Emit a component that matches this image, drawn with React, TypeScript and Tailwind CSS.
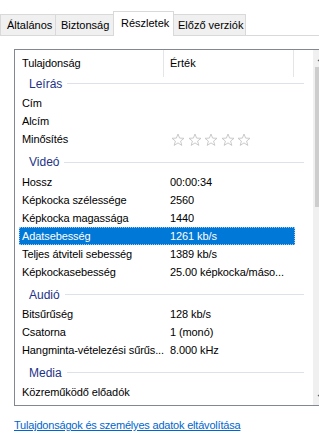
import React from "react";

const font = { fontFamily: '"Liberation Sans", Arial, sans-serif' };

function Star() {
  return (
    <svg width="14" height="14" viewBox="0 0 14 14" className="shrink-0">
      <path
        d="M7 1 L8.6 5.1 L13 5.3 L9.6 8.1 L10.8 12.4 L7 9.9 L3.2 12.4 L4.4 8.1 L1 5.3 L5.4 5.1 Z"
        fill="none"
        stroke="#c4c4c4"
        strokeWidth="0.9"
        strokeLinejoin="round"
      />
    </svg>
  );
}

type Row =
  | { kind: "group"; label: string; h: string }
  | { kind: "item"; label: string; value?: string; stars?: boolean; selected?: boolean };

const rows: Row[] = [
  { kind: "group", label: "Leírás", h: "h-[21px]" },
  { kind: "item", label: "Cím" },
  { kind: "item", label: "Alcím" },
  { kind: "item", label: "Minősítés", stars: true },
  { kind: "group", label: "Videó", h: "h-[25px] pt-[3px]" },
  { kind: "item", label: "Hossz", value: "00:00:34" },
  { kind: "item", label: "Képkocka szélessége", value: "2560" },
  { kind: "item", label: "Képkocka magassága", value: "1440" },
  { kind: "item", label: "Adatsebesség", value: "1261 kb/s", selected: true },
  { kind: "item", label: "Teljes átviteli sebesség", value: "1389 kb/s" },
  { kind: "item", label: "Képkockasebesség", value: "25.00 képkocka/máso..." },
  { kind: "group", label: "Audió", h: "h-[24px] pt-[3px]" },
  { kind: "item", label: "Bitsűrűség", value: "128 kb/s" },
  { kind: "item", label: "Csatorna", value: "1 (monó)" },
  { kind: "item", label: "Hangminta-vételezési sűrűs...", value: "8.000 kHz" },
  { kind: "group", label: "Media", h: "h-[24px] pt-[3px]" },
  { kind: "item", label: "Közreműködő előadók" },
];

function GroupRow({ label, h }: { label: string; h: string }) {
  return (
    <div className={`flex items-center shrink-0 ${h} pl-[14px] pr-[9px]`}>
      <span className="text-[12px] leading-[16px] text-[#1e3287] whitespace-nowrap">{label}</span>
      <div className="ml-[5px] flex-1 h-px bg-[#dde2e8]" />
    </div>
  );
}

function ItemRow({ label, value, stars, selected }: { label: string; value?: string; stars?: boolean; selected?: boolean }) {
  return (
    <div className="flex shrink-0 h-[18px] pl-[4px]">
      <div
        className={`flex w-[276px] h-[18px] items-center border border-dotted ${
          selected ? "bg-[#0078d7] text-white border-[#9ccaf2]" : "border-transparent text-black"
        }`}
      >
        <div className="w-[144px] shrink-0 pl-[2px] whitespace-nowrap text-[11px] leading-[16px] tracking-[-0.1px]">{label}</div>
        <div className="flex-1 pl-[6px] whitespace-nowrap text-[11px] leading-[16px] tracking-[-0.1px]">
          {stars ? (
            <div className="flex gap-[2.5px] pl-[1px] pt-[1px]">
              <Star />
              <Star />
              <Star />
              <Star />
              <Star />
            </div>
          ) : (
            value
          )}
        </div>
      </div>
    </div>
  );
}

export default function App() {
  return (
    <div className="w-[319px] h-[436px] overflow-hidden bg-white text-black" style={font}>
      <div className="w-[400px]">
        <div className="h-[12px]" />
        {/* Tabs */}
        <div className="flex items-end h-[24px] border-b border-[#d9d9d9] text-[11px]">
          <div className="h-[21px] w-[56px] bg-[#f0f0f0] border-l border-t border-r border-[#d9d9d9] flex items-center pl-[6px] pt-[1px]">
            Általános
          </div>
          <div className="h-[21px] w-[58px] bg-[#f0f0f0] border-t border-r border-[#d9d9d9] flex items-center pl-[5px] pt-[1px]">
            Biztonság
          </div>
          <div className="relative z-10 -ml-px -mb-px h-[25px] w-[61px] bg-white border-l border-t border-r border-[#d9d9d9] flex items-center pl-[7px] pb-[2px]">
            Részletek
          </div>
          <div className="h-[21px] w-[72px] bg-[#f0f0f0] border-t border-r border-[#d9d9d9] flex items-center pl-[4px] pt-[1px]">
            Előző verziók
          </div>
        </div>

        {/* List box */}
        <div className="ml-[14px] mt-[13px] w-[317px] h-[357px] border border-[#828790] flex">
          <div className="w-[298px] flex flex-col overflow-hidden">
            {/* header */}
            <div className="flex h-[23px] shrink-0">
              <div className="w-[148px] pl-[7px] pt-[5px] text-[11px] leading-[16px] tracking-[-0.1px]">Tulajdonság</div>
              <div className="w-px h-[27px] bg-[#e5e5e5]" />
              <div className="w-[129px] pl-[6px] pt-[5px] text-[11px] leading-[16px]">Érték</div>
              <div className="w-px h-[27px] bg-[#e5e5e5]" />
            </div>
            {rows.map((r, i) =>
              r.kind === "group" ? (
                <GroupRow key={i} label={r.label} h={r.h} />
              ) : (
                <ItemRow key={i} label={r.label} value={r.value} stars={r.stars} selected={r.selected} />
              )
            )}
          </div>
          {/* scrollbar */}
          <div className="w-[17px] bg-[#f0f0f0] flex flex-col">
            <div className="h-[17px] flex items-center justify-center">
              <svg width="9" height="6" viewBox="0 0 9 6">
                <path d="M1 5 L4.5 1.5 L8 5" fill="none" stroke="#606060" strokeWidth="1.2" />
              </svg>
            </div>
            <div className="h-[140px] mx-[2px] bg-[#cdcdcd]" />
            <div className="flex-1" />
            <div className="h-[17px] flex items-center justify-center">
              <svg width="9" height="6" viewBox="0 0 9 6">
                <path d="M1 1 L4.5 4.5 L8 1" fill="none" stroke="#606060" strokeWidth="1.2" />
              </svg>
            </div>
          </div>
        </div>

        {/* link */}
        <div className="mt-[11px] ml-[14px] text-[11px] leading-[16px] tracking-[-0.2px]">
          <a href="#" className="text-[#0066cc] underline">
            Tulajdonságok és személyes adatok eltávolítása
          </a>
        </div>
      </div>
    </div>
  );
}
